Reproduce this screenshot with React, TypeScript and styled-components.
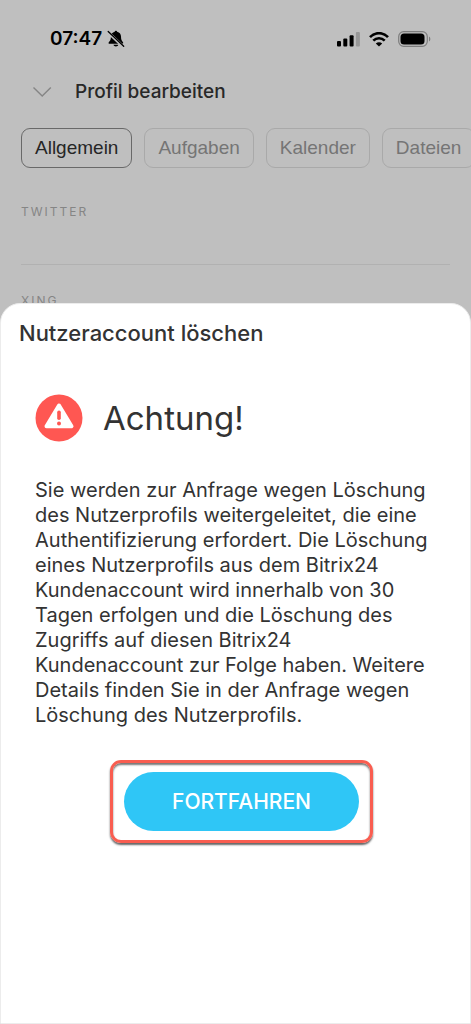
import React from "react";
import styled, { createGlobalStyle } from "styled-components";

const GlobalStyle = createGlobalStyle`
  *, *::before, *::after { box-sizing: border-box; }
  body {
    margin: 0;
    background: #bfbfbf;
    font-family: Inter, "Liberation Sans", sans-serif;
    color: #333333;
  }
  h1, h2, h3, p { margin: 0; font-weight: 400; }
`;

const Screen = styled.div`
  position: relative;
  min-height: 100vh;
  overflow: hidden;
`;

const StatusBar = styled.div`
  display: flex;
  align-items: center;
  justify-content: space-between;
  height: 76px;
  padding: 2px 40px 0 50px;
  color: #000000;
`;

const StatusGroup = styled.div<{ $gap: number }>`
  display: flex;
  align-items: center;
  gap: ${({ $gap }) => $gap}px;
`;

const Clock = styled.time`
  font-size: 19px;
  line-height: 24px;
  font-weight: 600;
`;

const Header = styled.header`
  display: flex;
  align-items: center;
  gap: 23px;
  height: 32px;
  padding-left: 32px;
`;

const BackButton = styled.button`
  display: flex;
  padding: 0;
  border: 0;
  background: none;
  color: #858585;
`;

const PageTitle = styled.h1`
  font-size: 19px;
  line-height: 32px;
  font-weight: 500;
  color: #282828;
`;

const Tabs = styled.nav`
  display: flex;
  gap: 12px;
  padding: 20px 0 0 21px;
`;

const Tab = styled.button<{ $active?: boolean }>`
  flex: none;
  height: 40px;
  padding: 0 13px;
  border: 1px solid ${({ $active }) => ($active ? "#696969" : "#a9a9a9")};
  border-radius: 9px;
  background: none;
  font-family: "Liberation Sans", Arial, sans-serif;
  font-size: 19px;
  line-height: 24px;
  color: ${({ $active }) => ($active ? "#262626" : "#757575")};
`;

const Field = styled.section`
  height: 89px;
  margin: 0 21px;
  padding-top: 28px;
  border-bottom: 1px solid #b1b1b1;
  &:first-of-type { height: 97px; padding-top: 36px; }
`;

const FieldLabel = styled.h2`
  font-size: 12px;
  line-height: 16px;
  letter-spacing: 2px;
  color: #858585;
`;

const Overlay = styled.div`
  position: absolute;
  inset: 0;
  display: flex;
  flex-direction: column;
  padding-top: 303px;
`;

const Sheet = styled.section`
  flex: 1;
  border: 1px solid #ececec;
  border-radius: 20px 20px 0 0;
  background: #ffffff;
`;

const SheetTitle = styled.h2`
  padding: 14px 18px 0;
  font-size: 22px;
  line-height: 30px;
  font-weight: 500;
`;

const SheetBody = styled.div`
  padding: 46px 22px 32px 34px;
`;

const Warning = styled.div`
  display: flex;
  align-items: center;
  gap: 20px;
`;

const WarningTitle = styled.h3`
  font-size: 33px;
  line-height: 48px;
`;

const Message = styled.p`
  padding: 36px 12px 0 0;
  font-size: 20px;
  line-height: 25px;
`;

const Highlight = styled.div`
  width: fit-content;
  margin: 32px auto 0;
  padding: 9px 11px;
  border: 3px solid #f95d50;
  border-radius: 11px;
  box-shadow: 0 2px 2px #666666, inset 0 2px 2px #777777;
`;

const ContinueButton = styled.button`
  display: block;
  width: 235px;
  height: 59px;
  border: 0;
  border-radius: 30px;
  background: #2fc6f6;
  color: #ffffff;
  font-family: inherit;
  font-size: 21px;
  line-height: 24px;
  font-weight: 500;
`;

const BellOff = () => (
  <svg width="18" height="18" viewBox="0 0 18 18" aria-hidden="true">
    <path
      fill="currentColor"
      d="M7.700 1.700c.2-1.300 2.200-1.300 2.400 0 2.600.6 3.900 2.400 3.900 4.900 0 3.200.7 4.300 1.800 5.400.6.700.6 1.800-.5 1.800H2.500c-1.100 0-1.200-1-.5-1.800 1.200-1.100 1.900-2.200 1.900-5.400 0-2.500 1.400-4.300 3.800-4.900zM6.500 14.700h4.800c-.3 2.300-4.500 2.300-4.800 0z"
    />
    <path d="M1.100 2.400 16 16.300" stroke="#bfbfbf" strokeWidth="3" />
    <path d="M1.200 1.500 16.700 16.300" stroke="currentColor" strokeWidth="1.300" strokeLinecap="round" />
  </svg>
);

const Signal = () => (
  <svg width="23" height="15" viewBox="0 0 23 15" fill="currentColor" aria-hidden="true">
    <rect x="0" y="9" width="4" height="5.500" rx="1" />
    <rect x="6.300" y="6.500" width="4" height="8" rx="1" />
    <rect x="12.600" y="3.200" width="4" height="11.300" rx="1" />
    <rect x="18.900" y="0" width="4" height="14.500" rx="1" fill="#989898" />
  </svg>
);

const Wifi = () => (
  <svg width="20" height="15" viewBox="0 0 20 15" fill="none" stroke="currentColor" aria-hidden="true">
    <path d="M1 5.200C6-.2 14-.2 19 5.200" strokeWidth="2.600" />
    <path d="M4.300 8.700c3.200-3.300 8.200-3.300 11.400 0" strokeWidth="2.600" />
    <path d="M10 14.600 6.800 11.500c1.800-1.700 4.600-1.700 6.400 0z" fill="currentColor" stroke="none" />
  </svg>
);

const Battery = () => (
  <svg width="33" height="16" viewBox="0 0 33 16" aria-hidden="true">
    <rect x=".7" y=".7" width="28.600" height="14.600" rx="5" fill="none" stroke="#7d7d7d" strokeWidth="1.200" />
    <rect x="2.500" y="2.500" width="24" height="11" rx="3.500" fill="currentColor" />
    <path d="M31 5.500c1.800.7 1.800 4.300 0 5z" fill="#7d7d7d" />
  </svg>
);

const ChevronDown = () => (
  <svg width="20" height="12" viewBox="0 0 20 12" fill="none" stroke="currentColor" aria-hidden="true">
    <path d="m1.500 1.500 8.700 8.500 8.600-8.500" strokeWidth="1.400" />
  </svg>
);

const WarningIcon = () => (
  <svg width="48" height="48" viewBox="0 0 48 48" aria-hidden="true">
    <circle cx="24" cy="24" r="23.500" fill="#ff5752" />
    <path
      d="M24 11.500 36.500 32.200H11.500z"
      fill="#ffffff"
      stroke="#ffffff"
      strokeWidth="4"
      strokeLinejoin="round"
    />
    <rect x="22.200" y="16.500" width="3.600" height="9.500" rx="1.800" fill="#ff5752" />
    <circle cx="24" cy="29.500" r="2" fill="#ff5752" />
  </svg>
);

const tabs = ["Allgemein", "Aufgaben", "Kalender", "Dateien"];
const fields = ["TWITTER", "XING"];

export default function App() {
  return (
    <Screen>
      <GlobalStyle />
      <StatusBar>
        <StatusGroup $gap={5}>
          <Clock>07:47</Clock>
          <BellOff />
        </StatusGroup>
        <StatusGroup $gap={9}>
          <Signal />
          <Wifi />
          <Battery />
        </StatusGroup>
      </StatusBar>
      <Header>
        <BackButton aria-label="Schließen">
          <ChevronDown />
        </BackButton>
        <PageTitle>Profil bearbeiten</PageTitle>
      </Header>
      <Tabs>
        {tabs.map((name, index) => (
          <Tab key={name} $active={index === 0}>
            {name}
          </Tab>
        ))}
      </Tabs>
      {fields.map((name) => (
        <Field key={name}>
          <FieldLabel>{name}</FieldLabel>
        </Field>
      ))}
      <Overlay>
        <Sheet role="dialog" aria-labelledby="sheet-title">
          <SheetTitle id="sheet-title">Nutzeraccount löschen</SheetTitle>
          <SheetBody>
            <Warning>
              <WarningIcon />
              <WarningTitle>Achtung!</WarningTitle>
            </Warning>
            <Message>
              Sie werden zur Anfrage wegen Löschung des Nutzerprofils weitergeleitet, die eine
              Authentifizierung erfordert. Die Löschung eines Nutzerprofils aus dem Bitrix24
              Kundenaccount wird innerhalb von 30 Tagen erfolgen und die Löschung des Zugriffs auf
              diesen Bitrix24 Kundenaccount zur Folge haben. Weitere Details finden Sie in der
              Anfrage wegen Löschung des Nutzerprofils.
            </Message>
            <Highlight>
              <ContinueButton>FORTFAHREN</ContinueButton>
            </Highlight>
          </SheetBody>
        </Sheet>
      </Overlay>
    </Screen>
  );
}
